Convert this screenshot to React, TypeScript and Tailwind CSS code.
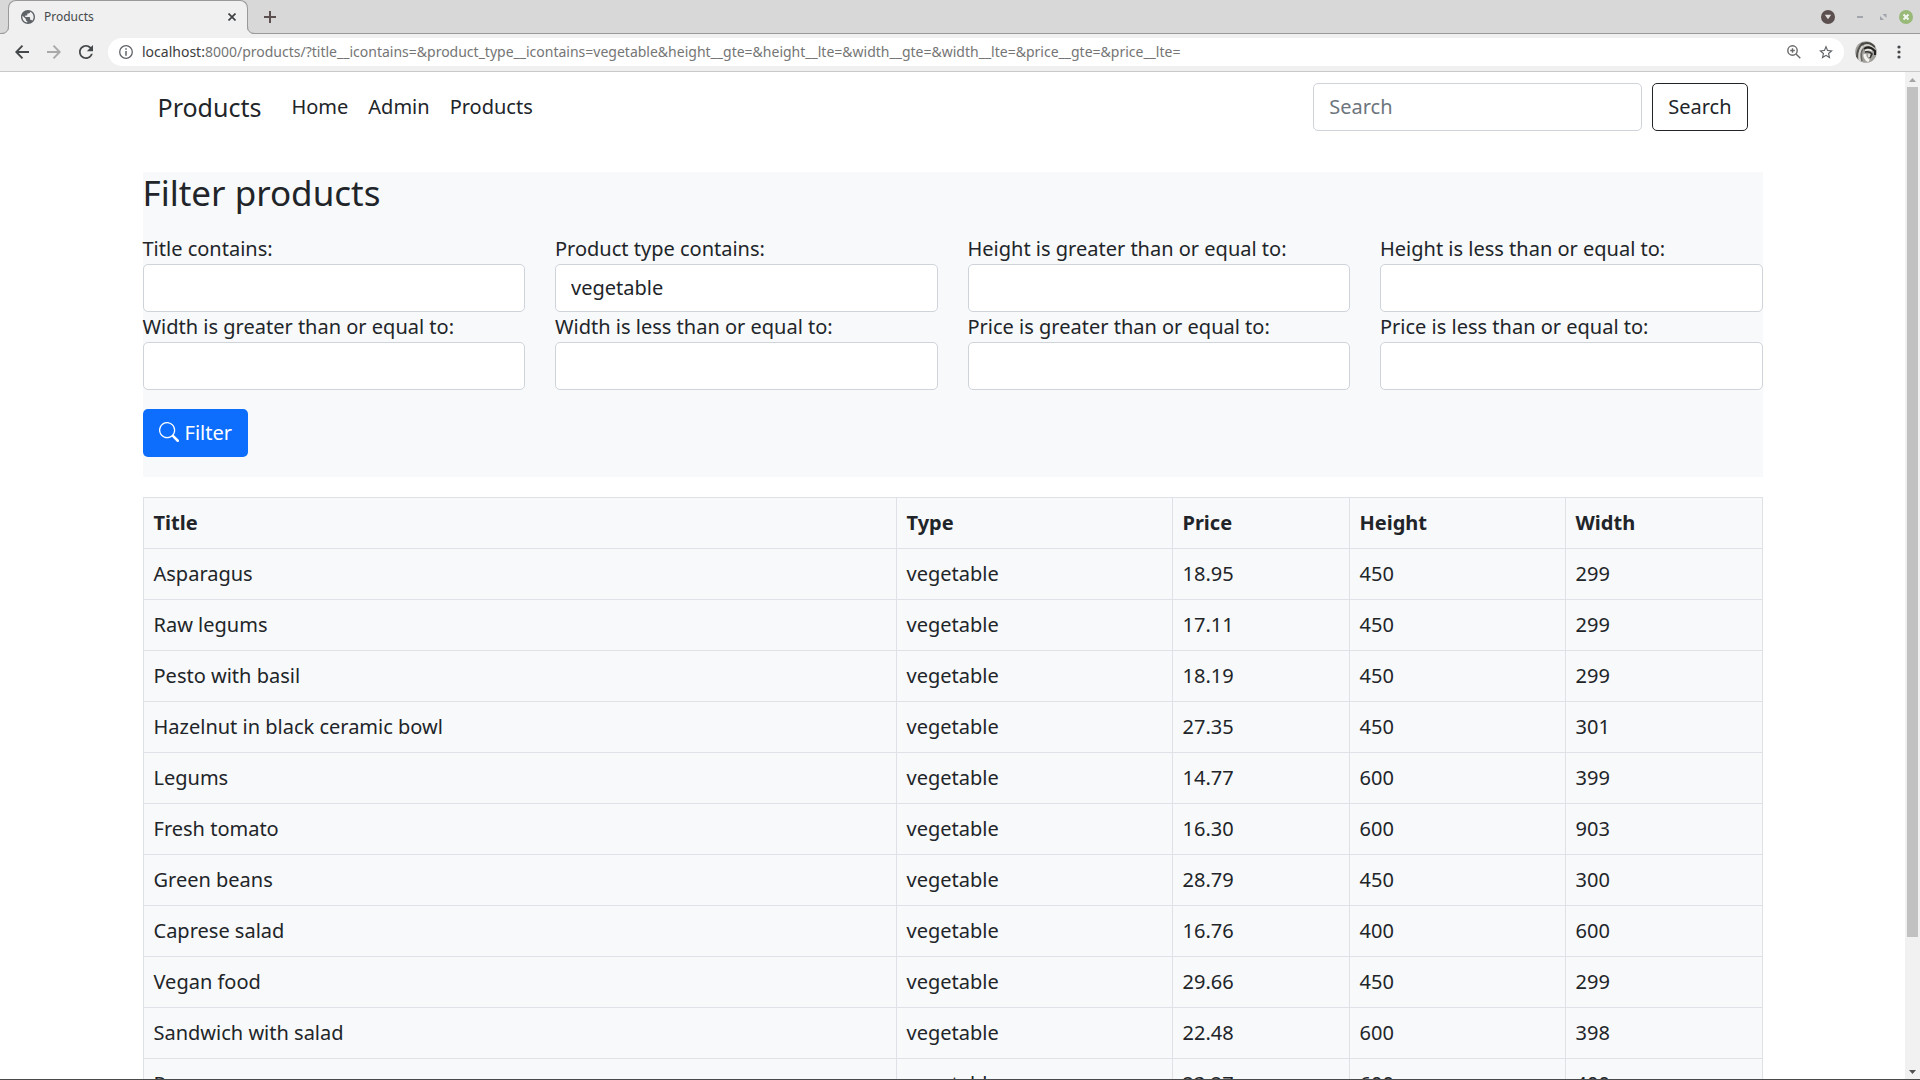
import React from "react";

type Product = [title: string, type: string, price: string, height: string, width: string];

const products: Product[] = [
  ["Asparagus", "vegetable", "18.95", "450", "299"],
  ["Raw legums", "vegetable", "17.11", "450", "299"],
  ["Pesto with basil", "vegetable", "18.19", "450", "299"],
  ["Hazelnut in black ceramic bowl", "vegetable", "27.35", "450", "301"],
  ["Legums", "vegetable", "14.77", "600", "399"],
  ["Fresh tomato", "vegetable", "16.30", "600", "903"],
  ["Green beans", "vegetable", "28.79", "450", "300"],
  ["Caprese salad", "vegetable", "16.76", "400", "600"],
  ["Vegan food", "vegetable", "29.66", "450", "299"],
  ["Sandwich with salad", "vegetable", "22.48", "600", "398"],
  ["Ramen", "vegetable", "23.27", "600", "400"],
];

const fields = [
  { id: "title", label: "Title contains:", value: "" },
  { id: "product_type", label: "Product type contains:", value: "vegetable" },
  { id: "height_gte", label: "Height is greater than or equal to:", value: "" },
  { id: "height_lte", label: "Height is less than or equal to:", value: "" },
  { id: "width_gte", label: "Width is greater than or equal to:", value: "" },
  { id: "width_lte", label: "Width is less than or equal to:", value: "" },
  { id: "price_gte", label: "Price is greater than or equal to:", value: "" },
  { id: "price_lte", label: "Price is less than or equal to:", value: "" },
];

const url =
  "/products/?title__icontains=&product_type__icontains=vegetable&height__gte=&height__lte=&width__gte=&width__lte=&price__gte=&price__lte=";

function TabStrip() {
  return (
    <div className="flex h-[34px] shrink-0 bg-[#d8d8d8]">
      <div className="flex w-2 border-b border-[#999]" />
      <div className="relative flex w-60 items-center rounded-t-lg border border-b-0 border-[#999] bg-[#f0f0f0] pr-[7px] pb-[2px] pl-3">
        <svg className="absolute bottom-0 -left-2 h-2 w-2" viewBox="0 0 8 8">
          <path d="M0 8 Q8 8 8 0 L9 0 V8Z" fill="#f0f0f0" />
          <path d="M0 7.5 Q7.5 7.5 7.5 0" fill="none" stroke="#999" />
        </svg>
        <svg className="absolute -right-2 bottom-0 h-2 w-2" viewBox="0 0 8 8">
          <path d="M8 8 Q0 8 0 0 L-1 0 V8Z" fill="#f0f0f0" />
          <path d="M8 7.5 Q0.5 7.5 0.5 0" fill="none" stroke="#999" />
        </svg>
        <svg className="h-[14px] w-[14px] shrink-0" viewBox="2 2 20 20" fill="#5f6368">
          <path d="M12 2C6.48 2 2 6.48 2 12s4.48 10 10 10 10-4.48 10-10S17.52 2 12 2zm-1 17.93c-3.95-.49-7-3.85-7-7.93 0-.62.08-1.21.21-1.79L9 15v1c0 1.1.9 2 2 2v1.93zm6.9-2.54c-.26-.81-1-1.39-1.9-1.39h-1v-3c0-.55-.45-1-1-1H8v-2h2c.55 0 1-.45 1-1V7h2c1.1 0 2-.9 2-2v-.41c2.93 1.19 5 4.06 5 7.41 0 2.08-.8 3.97-2.1 5.39z" />
        </svg>
        <span className="ml-[9px] text-[12px] text-[#45494c]">Products</span>
        <button aria-label="Close tab" className="ml-auto flex h-4 w-4 items-center justify-center">
          <svg className="h-2 w-2" viewBox="0 0 8 8" stroke="#3f4245" strokeWidth="1.7">
            <path d="M0.5 0.5 7.5 7.5M7.5 0.5 0.5 7.5" />
          </svg>
        </button>
      </div>
      <div className="flex flex-1 items-center border-b border-[#999] pr-[7px] pl-4">
        <button aria-label="New tab">
          <svg className="h-3 w-3" viewBox="0 0 12 12" stroke="#5c4f4f" strokeWidth="2">
            <path d="M6 0V12M0 6H12" />
          </svg>
        </button>
        <button aria-label="Tab search" className="ml-auto">
          <svg className="h-[14px] w-[14px]" viewBox="0 0 14 14">
            <circle cx="7" cy="7" r="7" fill="#5c4f4f" />
            <path d="M3.8 4.8H10.2L7 9.2Z" fill="#e4e0e0" />
          </svg>
        </button>
        <button aria-label="Minimize" className="ml-[18px]">
          <svg className="h-4 w-4" viewBox="0 0 16 16">
            <path d="M4 8H10" stroke="#a2a5ac" strokeWidth="2" />
          </svg>
        </button>
        <button aria-label="Restore" className="ml-[7px]">
          <svg className="h-4 w-4" viewBox="0 0 16 16" fill="#9fa3ac">
            <path d="M6.5 5H10.5V9Z M4 7V11H8Z" />
          </svg>
        </button>
        <button aria-label="Close window" className="ml-[7px]">
          <svg className="h-[14px] w-[14px]" viewBox="0 0 14 14">
            <circle cx="7" cy="7" r="7" fill="#98b978" />
            <path d="M4.5 4.5 9.5 9.5M9.5 4.5 4.5 9.5" stroke="#f4f7f1" strokeWidth="2" />
          </svg>
        </button>
      </div>
    </div>
  );
}

function Toolbar() {
  return (
    <div className="flex h-[38px] shrink-0 items-center border-b border-[#c9c9c9] bg-[#f0f0f0] pr-[13px] pb-px pl-[15px]">
      <button aria-label="Back">
        <svg className="h-[14px] w-[14px]" viewBox="0 0 14 14" fill="none" stroke="#45484a" strokeWidth="1.9">
          <path d="M14 7H1.5M7.5 0.7 1.3 7 7.5 13.3" />
        </svg>
      </button>
      <button aria-label="Forward" className="ml-[18px]">
        <svg className="h-[14px] w-[14px]" viewBox="0 0 14 14" fill="none" stroke="#a9a9a9" strokeWidth="1.9">
          <path d="M0 7H12.5M6.5 0.7 12.7 7 6.5 13.3" />
        </svg>
      </button>
      <button aria-label="Reload" className="ml-[18px]">
        <svg className="h-[14px] w-[14px]" viewBox="4 4 16 16" fill="#45484a">
          <path d="M17.65 6.35C16.2 4.9 14.21 4 12 4c-4.42 0-7.99 3.58-7.99 8s3.57 8 7.99 8c3.73 0 6.84-2.55 7.73-6h-2.08c-.82 2.33-3.04 4-5.65 4-3.31 0-6-2.69-6-6s2.69-6 6-6c1.66 0 3.14.69 4.22 1.78L13 11h7V4l-2.35 2.35z" />
        </svg>
      </button>
      <div className="ml-[15px] flex h-7 flex-1 items-center rounded-full bg-white px-[11px]">
        <svg className="h-[14px] w-[14px] shrink-0" viewBox="0 0 14 14">
          <circle cx="7" cy="7" r="6.3" fill="none" stroke="#5f6368" strokeWidth="1.3" />
          <path d="M7 3.2V4.8M7 6V10.7" stroke="#5f6368" strokeWidth="1.5" />
        </svg>
        <div className="ml-[9px] text-[14px] leading-5 whitespace-nowrap text-[#757575]">
          <span className="text-[#3c3c3c]">localhost:</span>8000{url}
        </div>
        <button aria-label="Zoom" className="ml-auto">
          <svg className="h-[14px] w-[14px]" viewBox="0 0 14 14" fill="none" stroke="#696969" strokeWidth="1.4">
            <circle cx="5.5" cy="5.5" r="4.7" />
            <path d="M9 9 13.3 13.3M5.5 3.2V7.8M3.2 5.5H7.8" />
          </svg>
        </button>
        <button aria-label="Bookmark" className="ml-[18px]">
          <svg className="h-[14px] w-[14px]" viewBox="2 2 20 19" fill="#5f6368">
            <path d="M22 9.24l-7.19-.62L12 2 9.19 8.63 2 9.24l5.46 4.73L5.82 21 12 17.27 18.18 21l-1.63-7.03L22 9.24zM12 15.4l-3.76 2.27 1-4.28-3.32-2.88 4.38-.38L12 6.1l1.71 4.04 4.38.38-3.32 2.88 1 4.28L12 15.4z" />
          </svg>
        </button>
      </div>
      <button aria-label="Profile" className="ml-[11px]">
        <svg className="h-[22px] w-[22px]" viewBox="0 0 22 22">
          <defs>
            <clipPath id="avatar">
              <circle cx="11" cy="11" r="10.8" />
            </clipPath>
          </defs>
          <g clipPath="url(#avatar)" fill="none">
            <rect width="22" height="22" fill="#a19f9b" />
            <path d="M2 20Q1 8 8 2" stroke="#55534f" strokeWidth="2" />
            <path d="M5 21Q3 11 8 5" stroke="#d6d4cf" strokeWidth="2" />
            <path d="M7 20Q5 12 8 8" stroke="#6b6966" strokeWidth="1.5" />
            <path d="M6 4Q13 -1 20 6" stroke="#4b4946" strokeWidth="2" />
            <path d="M9 5Q14 2 20 9" stroke="#d9d7d2" strokeWidth="1.5" />
            <path d="M9 8Q14 4 20 10V14" stroke="#242321" strokeWidth="2" />
            <path d="M10 9.500Q14 8 17 10" stroke="#f0eee9" strokeWidth="1.5" />
            <path d="M10 11Q15 10 17 13L15 17" stroke="#353331" strokeWidth="1.5" />
            <path d="M10 13Q9 17 14 20" stroke="#f4f3ef" strokeWidth="3" />
            <path d="M14 13V16" stroke="#dddbd5" strokeWidth="2" />
          </g>
        </svg>
      </button>
      <button aria-label="Menu" className="ml-[14px]">
        <svg className="h-4 w-4" viewBox="0 0 16 16" fill="#45484a">
          <circle cx="8" cy="3" r="1.6" />
          <circle cx="8" cy="8" r="1.6" />
          <circle cx="8" cy="13" r="1.6" />
        </svg>
      </button>
    </div>
  );
}

function Navbar() {
  return (
    <nav className="flex items-center px-[15px] pt-[11px] pb-[10px]">
      <a href="#" className="mr-[30px] text-[25px] leading-[38px]">
        Products
      </a>
      <div className="flex gap-5">
        <a href="#">Home</a>
        <a href="#">Admin</a>
        <a href="#">Products</a>
      </div>
      <form className="ml-auto flex gap-[10px]" onSubmit={(e) => e.preventDefault()}>
        <input
          type="search"
          aria-label="Search"
          placeholder="Search"
          className="h-12 w-[329px] rounded-[5px] border border-[#ced4da] px-[15px] pb-[2px] placeholder:text-[#6c757d]"
        />
        <button className="h-12 rounded-[5px] border border-[#212529] px-[15px]">Search</button>
      </form>
    </nav>
  );
}

function FilterPanel() {
  return (
    <form className="mt-[31px] bg-[#f8f9fa] pb-5" onSubmit={(e) => e.preventDefault()}>
      <h3 className="text-[35px] leading-[42px]">Filter products</h3>
      <div className="mt-5 grid grid-cols-4 gap-x-[30px]">
        {fields.map((f) => (
          <div key={f.id} className="flex flex-col">
            <label htmlFor={f.id}>{f.label}</label>
            <input
              id={f.id}
              defaultValue={f.value}
              className="h-12 w-full rounded-[5px] border border-[#ced4da] bg-white px-[15px] pb-[2px]"
            />
          </div>
        ))}
      </div>
      <button className="mt-[19px] flex h-12 items-center gap-[6px] rounded-[5px] bg-[#0d6efd] px-4 text-white">
        <svg className="mb-[3px] h-5 w-5" viewBox="0 0 16 16" fill="currentColor">
          <path d="M11.742 10.344a6.5 6.5 0 1 0-1.397 1.398h-.001c.03.04.062.078.098.115l3.85 3.85a1 1 0 0 0 1.415-1.414l-3.85-3.85a1.007 1.007 0 0 0-.115-.1zM12 6.5a5.5 5.5 0 1 1-11 0 5.5 5.5 0 0 1 11 0z" />
        </svg>
        Filter
      </button>
    </form>
  );
}

function ProductTable() {
  const cell = "border border-[#dee2e6] px-[10px] py-[10px] text-left";
  return (
    <table className="mt-5 w-full table-fixed border-collapse bg-[#f8f9fa]">
      <colgroup>
        <col />
        <col className="w-[276px]" />
        <col className="w-[177px]" />
        <col className="w-[216px]" />
        <col className="w-[197px]" />
      </colgroup>
      <thead>
        <tr>
          {["Title", "Type", "Price", "Height", "Width"].map((h) => (
            <th key={h} scope="col" className={cell + " font-bold"}>
              {h}
            </th>
          ))}
        </tr>
      </thead>
      <tbody>
        {products.map((row) => (
          <tr key={row[0]}>
            {row.map((value, i) => (
              <td key={i} className={cell}>
                {value}
              </td>
            ))}
          </tr>
        ))}
      </tbody>
    </table>
  );
}

function Scrollbar() {
  return (
    <div className="flex w-[15px] shrink-0 flex-col items-center bg-[#f1f1f1]" aria-hidden="true">
      <svg className="h-[15px] w-[15px] shrink-0" viewBox="0 0 15 15">
        <path d="M4 10H11L7.5 6Z" fill="#a3a3a3" />
      </svg>
      <div className="flex w-[11px] flex-1 flex-col">
        <div className="h-[87%] bg-[#c1c1c1]" />
      </div>
      <svg className="h-[15px] w-[15px] shrink-0" viewBox="0 0 15 15">
        <path d="M4 6H11L7.5 10Z" fill="#505050" />
      </svg>
    </div>
  );
}

export default function App() {
  return (
    <div className="flex h-screen flex-col overflow-hidden border-b border-[#4a4a4a] bg-white font-['Noto_Sans',sans-serif]">
      <TabStrip />
      <Toolbar />
      <div className="flex min-h-0 flex-1">
        <main className="min-w-0 flex-1 overflow-hidden text-[20px] leading-[30px] text-[#212529]">
          <div className="mx-auto max-w-[1650px] px-[15px]">
            <Navbar />
            <FilterPanel />
            <ProductTable />
          </div>
        </main>
        <Scrollbar />
      </div>
    </div>
  );
}
